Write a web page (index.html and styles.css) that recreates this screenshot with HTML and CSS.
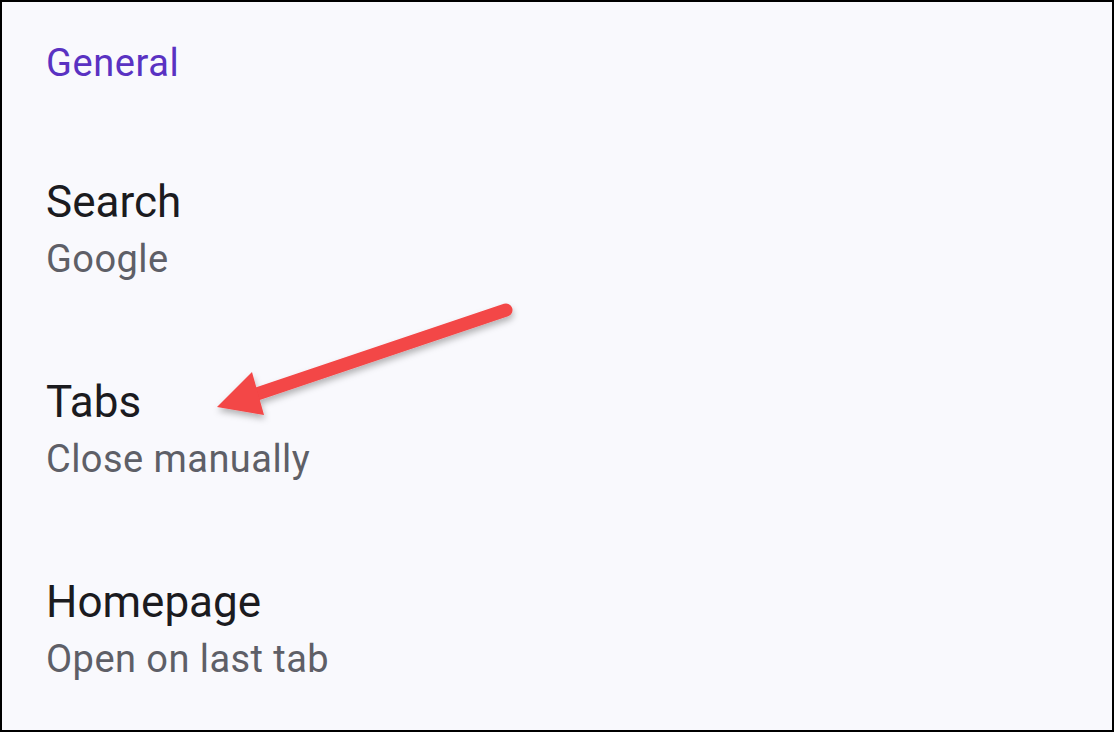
FILE: index.html
```html
<!DOCTYPE html>
<html>
<head>
<meta charset="utf-8">
<link rel="stylesheet" href="styles.css">
</head>
<body>
<div class="screen">
  <div class="section-header">General</div>
  <div class="list">
    <div class="item">
      <div class="title">Search</div>
      <div class="summary">Google</div>
    </div>
    <div class="item">
      <div class="title">Tabs</div>
      <div class="summary">Close manually</div>
    </div>
    <div class="item">
      <div class="title">Homepage</div>
      <div class="summary">Open on last tab</div>
    </div>
  </div>
  <svg class="arrow" width="1114" height="732" viewBox="0 0 1114 732">
    <defs>
      <filter id="sh" x="-20%" y="-20%" width="140%" height="160%">
        <feDropShadow dx="1" dy="4" stdDeviation="3" flood-color="#000" flood-opacity="0.28"/>
      </filter>
    </defs>
    <g filter="url(#sh)">
      <line x1="506" y1="310" x2="245" y2="398" stroke="#f34646" stroke-width="13" stroke-linecap="round"/>
      <polygon points="217,407 252,372 264,415" fill="#f34646"/>
    </g>
  </svg>
</div>
</body>
</html>
```

FILE: styles.css
```css
html, body {
  margin: 0;
  padding: 0;
}
body {
  background: #f9f9fd;
  font-family: Roboto, "Noto Sans", "Liberation Sans", sans-serif;
}
.screen {
  position: relative;
  width: 1114px;
  height: 732px;
  box-sizing: border-box;
  border: 2px solid #000;
  background: #f9f9fd;
  padding: 37px 0 0 44px;
  overflow: hidden;
}
.section-header {
  font-size: 38px;
  line-height: 48px;
  letter-spacing: 0.6px;
  color: #5a32c2;
}
.list {
  display: flex;
  flex-direction: column;
  gap: 91px;
  margin-top: 87px;
}
.item {
  display: flex;
  flex-direction: column;
  gap: 5px;
}
.title {
  font-size: 44px;
  line-height: 56px;
  color: #1b1b1f;
}
.summary {
  font-size: 38px;
  line-height: 48px;
  letter-spacing: 0.45px;
  color: #5e5f67;
}
.arrow {
  position: absolute;
  left: -2px;
  top: -2px;
  pointer-events: none;
}
```
